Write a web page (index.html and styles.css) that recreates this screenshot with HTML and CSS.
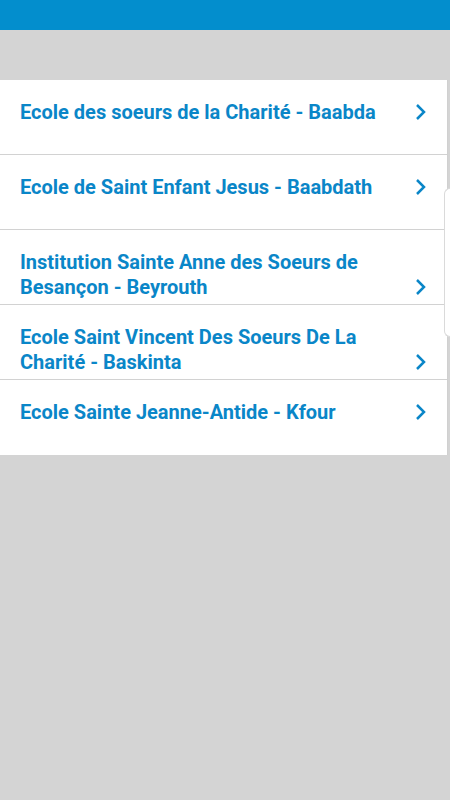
FILE: index.html
```html
<!DOCTYPE html>
<html lang="en">
<head>
    <meta charset="UTF-8">
    <meta name="viewport" content="width=device-width, initial-scale=1.0">
    <title>Ecoles</title>
    <link rel="stylesheet" href="styles.css">
</head>
<body>
    <header class="topbar"></header>

    <main class="content">
        <ul class="school-list">
            <li class="school-item">
                <div class="school-row">
                    <span class="school-name">Ecole des soeurs de la Charité - Baabda</span>
                    <svg class="chevron" viewBox="0 0 12 18"><path d="M2 2l7 7-7 7"/></svg>
                </div>
            </li>
            <li class="school-item">
                <div class="school-row">
                    <span class="school-name">Ecole de Saint Enfant Jesus - Baabdath</span>
                    <svg class="chevron" viewBox="0 0 12 18"><path d="M2 2l7 7-7 7"/></svg>
                </div>
            </li>
            <li class="school-item">
                <div class="school-row">
                    <span class="school-name">Institution Sainte Anne des Soeurs de Besançon - Beyrouth</span>
                    <svg class="chevron" viewBox="0 0 12 18"><path d="M2 2l7 7-7 7"/></svg>
                </div>
            </li>
            <li class="school-item">
                <div class="school-row">
                    <span class="school-name">Ecole Saint Vincent Des Soeurs De La Charité - Baskinta</span>
                    <svg class="chevron" viewBox="0 0 12 18"><path d="M2 2l7 7-7 7"/></svg>
                </div>
            </li>
            <li class="school-item">
                <div class="school-row">
                    <span class="school-name">Ecole Sainte Jeanne-Antide - Kfour</span>
                    <svg class="chevron" viewBox="0 0 12 18"><path d="M2 2l7 7-7 7"/></svg>
                </div>
            </li>
        </ul>
    </main>

    <div class="edge-handle"></div>
</body>
</html>
```

FILE: styles.css
```css
body {
    margin: 0;
    padding: 0;
    background-color: #d4d4d4;
    font-family: Roboto, "Liberation Sans", sans-serif;
    height: 800px;
    overflow: hidden;
}
.topbar {
    height: 30px;
    background-color: #038ecd;
}
.content {
    padding-top: 50px;
}
.school-list {
    list-style: none;
    margin: 0;
    padding: 0;
    width: 447px;
    background-color: #fff;
    border-right: 1px solid #d0d0d0;
}
.school-item {
    height: 75px;
    box-sizing: border-box;
    padding: 20px 20px 0 20px;
    border-bottom: 1px solid #d2d2d2;
}
.school-item:last-child {
    border-bottom: none;
}
.school-row {
    display: flex;
    align-items: flex-end;
}
.school-name {
    flex: 1;
    font-size: 20px;
    font-weight: bold;
    line-height: 25px;
    color: #0a86c8;
    padding-right: 30px;
}
.chevron {
    width: 12px;
    height: 18px;
    margin-bottom: 4px;
    fill: none;
    stroke: #0a86c8;
    stroke-width: 2.5;
}
.edge-handle {
    position: absolute;
    right: 0;
    top: 188px;
    width: 5px;
    height: 147px;
    border: 1px solid #dadada;
    border-right: none;
    border-radius: 6px 0 0 6px;
    background-color: #fff;
}
```
